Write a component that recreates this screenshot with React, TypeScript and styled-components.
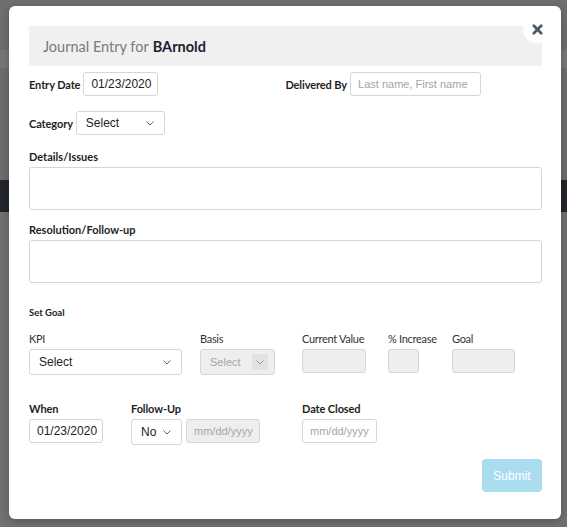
import React from 'react';
import styled, { createGlobalStyle } from 'styled-components';

const GlobalStyle = createGlobalStyle`
  html, body {
    margin: 0;
    padding: 0;
    background: #727272;
    font-family: Lato, 'Noto Sans', sans-serif;
  }
`;

const Backdrop = styled.div`
  width: 567px;
  height: 527px;
  position: relative;
  overflow: hidden;
  background: #707070;
`;

const BgBand = styled.div<{ $h: number; $bg: string }>`
  height: ${(p) => p.$h}px;
  background: ${(p) => p.$bg};
`;

const Overlay = styled.div`
  position: absolute;
  inset: 0;
  padding: 6px 6px 8px 9px;
  box-sizing: border-box;
`;

const Modal = styled.div`
  position: relative;
  width: 552px;
  height: 513px;
  background: #fff;
  border-radius: 6px;
  padding: 20px 19px 0 20px;
  box-sizing: border-box;
  box-shadow: 0 2px 10px rgba(0, 0, 0, 0.25);
`;

const Header = styled.div`
  background: #f0f0f0;
  height: 40px;
  display: flex;
  align-items: center;
  padding-left: 14px;
  font-size: 14.5px;
  color: #7a7a7a;
`;

const UserName = styled.span`
  color: #1d2230;
  font-weight: 700;
  margin-left: 4px;
`;

const CloseButton = styled.button`
  position: absolute;
  top: 9px;
  right: 10px;
  width: 28px;
  height: 28px;
  border-radius: 50%;
  border: none;
  background: #fff;
  display: flex;
  align-items: center;
  justify-content: center;
  padding: 0;
  cursor: pointer;
`;

const Row = styled.div<{ $mt?: number }>`
  display: flex;
  align-items: center;
  margin-top: ${(p) => p.$mt ?? 0}px;
`;

const InlineLabel = styled.label`
  font-size: 11px;
  font-weight: 700;
  color: #1e1e1e;
  margin-right: 3px;
  letter-spacing: -0.1px;
`;

const Input = styled.div<{ $w: number; $h?: number; $disabled?: boolean; $placeholder?: boolean; $fs?: number }>`
  width: ${(p) => p.$w}px;
  height: ${(p) => p.$h ?? 24}px;
  box-sizing: border-box;
  border: 1px solid #d6d6d6;
  border-radius: 3px;
  background: ${(p) => (p.$disabled ? '#eeeeee' : '#fff')};
  display: flex;
  align-items: center;
  padding: 0 7px;
  font-family: 'Liberation Sans', Arial, sans-serif;
  font-size: ${(p) => p.$fs ?? 12}px;
  color: ${(p) => (p.$placeholder ? '#a5a5a5' : '#222')};
  flex-shrink: 0;
`;

const Select = styled(Input)`
  justify-content: space-between;
  padding: 0 6px 0 9px;
`;

const Chevron = styled.svg<{ $boxed?: boolean }>`
  width: 16px;
  height: 16px;
  padding: 3px;
  box-sizing: border-box;
  background: ${(p) => (p.$boxed ? '#e2e2e2' : 'transparent')};
`;

const Arrow = ({ boxed, color = '#666' }: { boxed?: boolean; color?: string }) => (
  <Chevron $boxed={boxed} viewBox="0 0 10 10">
    <path d="M1.5 3.5 L5 7 L8.5 3.5" fill="none" stroke={color} strokeWidth="1" />
  </Chevron>
);

const Spacer = styled.div<{ $w: number }>`
  width: ${(p) => p.$w}px;
  flex-shrink: 0;
`;

const BlockLabel = styled.div<{ $mt: number }>`
  font-size: 11px;
  font-weight: 700;
  color: #1e1e1e;
  margin-top: ${(p) => p.$mt}px;
  margin-bottom: 4px;
`;

const TextArea = styled.div`
  height: 43px;
  border: 1px solid #d6d6d6;
  border-radius: 3px;
  box-sizing: border-box;
`;

const SectionTitle = styled.div`
  font-size: 9.5px;
  font-weight: 700;
  color: #222;
  margin-top: 24px;
`;

const GoalGrid = styled.div`
  display: grid;
  grid-template-columns: 171px 102px 86px 64px 1fr;
  margin-top: 14px;
  row-gap: 4px;
`;

const FieldLabel = styled.div<{ $bold?: boolean }>`
  font-size: 11px;
  font-weight: ${(p) => (p.$bold ? 700 : 400)};
  color: ${(p) => (p.$bold ? '#1e1e1e' : '#333')};
  letter-spacing: ${(p) => (p.$bold ? '-0.1px' : '-0.3px')};
`;

const Cell = styled.div`
  display: flex;
  gap: 4px;
  align-items: flex-start;
`;

const WhenGrid = styled.div`
  display: grid;
  grid-template-columns: 102px 171px 1fr;
  margin-top: 27px;
  row-gap: 4px;
`;

const Footer = styled.div`
  display: flex;
  justify-content: flex-end;
  margin-top: 14px;
`;

const SubmitButton = styled.button`
  width: 60px;
  height: 33px;
  border: none;
  border-radius: 4px;
  background: #a9dcef;
  color: #fff;
  font-family: 'Liberation Sans', Arial, sans-serif;
  font-size: 12px;
`;

const App = () => {
  return (
    <>
      <GlobalStyle />
      <Backdrop>
        <BgBand $h={50} $bg="#6f6f6f" />
        <BgBand $h={18} $bg="#787878" />
        <BgBand $h={112} $bg="#6e6e6e" />
        <BgBand $h={32} $bg="#22262b" />
        <BgBand $h={315} $bg="#717171" />
        <Overlay>
          <Modal>
            <CloseButton aria-label="Close">
              <svg width="11" height="11" viewBox="0 0 12 12">
                <path d="M2 2 L10 10 M10 2 L2 10" stroke="#4a5a6b" strokeWidth="3" strokeLinecap="round" />
              </svg>
            </CloseButton>
            <Header>
              Journal Entry for<UserName>BArnold</UserName>
            </Header>

            <Row $mt={6}>
              <InlineLabel>Entry Date</InlineLabel>
              <Input $w={75}>01/23/2020</Input>
              <Spacer $w={127} />
              <InlineLabel>Delivered By</InlineLabel>
              <Input $w={131} $placeholder $fs={11}>Last name, First name</Input>
            </Row>

            <Row $mt={15}>
              <InlineLabel>Category</InlineLabel>
              <Select $w={89}>
                Select
                <Arrow />
              </Select>
            </Row>

            <BlockLabel $mt={15}>Details/Issues</BlockLabel>
            <TextArea />
            <BlockLabel $mt={13}>Resolution/Follow-up</BlockLabel>
            <TextArea />

            <SectionTitle>Set Goal</SectionTitle>
            <GoalGrid>
              <FieldLabel>KPI</FieldLabel>
              <FieldLabel>Basis</FieldLabel>
              <FieldLabel>Current Value</FieldLabel>
              <FieldLabel>% Increase</FieldLabel>
              <FieldLabel>Goal</FieldLabel>
              <Select $w={153} $h={26}>
                Select
                <Arrow />
              </Select>
              <Select $w={75} $h={26} $disabled $placeholder $fs={11}>
                Select
                <Arrow boxed color="#999" />
              </Select>
              <Input $w={64} $disabled />
              <Input $w={31} $disabled />
              <Input $w={63} $disabled />
            </GoalGrid>

            <WhenGrid>
              <FieldLabel $bold>When</FieldLabel>
              <FieldLabel $bold>Follow-Up</FieldLabel>
              <FieldLabel $bold>Date Closed</FieldLabel>
              <Input $w={74}>01/23/2020</Input>
              <Cell>
                <Select $w={51} $h={26}>
                  No
                  <Arrow />
                </Select>
                <Input $w={74} $disabled $placeholder $fs={11}>mm/dd/yyyy</Input>
              </Cell>
              <Input $w={75} $placeholder $fs={11}>mm/dd/yyyy</Input>
            </WhenGrid>

            <Footer>
              <SubmitButton>Submit</SubmitButton>
            </Footer>
          </Modal>
        </Overlay>
      </Backdrop>
    </>
  );
};

export default App;
